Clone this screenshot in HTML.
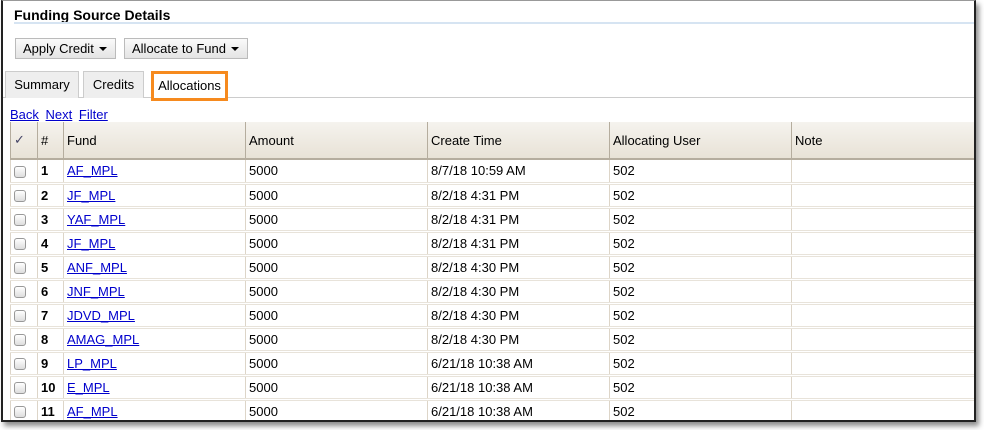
<!DOCTYPE html>
<html><head><style>
*{box-sizing:border-box;margin:0;padding:0}
body{width:984px;height:430px;background:#fff;font-family:"Liberation Sans",Arial,sans-serif;font-size:13px;color:#000;position:relative;overflow:hidden}
.frame{position:absolute;left:1px;top:0;width:975px;height:422px;border:2px solid #222;border-top:1px solid #999;box-shadow:3px 4px 5px rgba(0,0,0,.45);background:#fff;overflow:hidden}
.a{position:absolute}
.title{left:11px;top:6px;font-weight:bold;font-size:14px}
.uline{left:11px;top:21px;width:970px;height:2px;background:#d6e4f2}
.btn{top:37px;height:21px;border:1px solid #bbb;background:linear-gradient(#fafafa,#e4e4e4);line-height:19px;padding-left:7px;font-size:13px}
.btn:after{content:"";position:absolute;right:8px;top:8px;border-left:4px solid transparent;border-right:4px solid transparent;border-top:4px solid #000}
.tab{top:70px;height:27px;border:1px solid #ccc;border-bottom:none;background:#eee;line-height:26px;text-align:center}
.tabline{left:0;top:96px;width:980px;height:1px;background:#ccc}
.links{left:7px;top:106px}
.links span{color:#00c;text-decoration:underline;margin-right:3px}
table{position:absolute;left:7px;top:121px;border-collapse:collapse;width:970px}
th{height:37px;background:linear-gradient(#f5f3ee,#e8e2d6);border-left:1px solid #b5ad9e;border-bottom:2px solid #b5ad9e;text-align:left;font-weight:normal;padding-left:3px}
td{height:24px;border-left:1px solid #ddd5c8;border-bottom:3px double #e8e3da;padding-left:3px}
td.n{font-weight:bold}
td a{color:#00c;text-decoration:underline}
.cb{display:inline-block;width:12px;height:12px;border:1px solid #999;border-radius:3px;background:linear-gradient(#fff,#ddd);vertical-align:middle}
</style></head><body>
<div class="frame">
<div class="a title">Funding Source Details</div>
<div class="a uline"></div>
<div class="a btn" style="left:12px;width:101px">Apply Credit</div>
<div class="a btn" style="left:121px;width:124px">Allocate to Fund</div>
<div class="a tabline"></div>
<div class="a tab" style="left:2px;width:74px">Summary</div>
<div class="a tab" style="left:80px;width:61px">Credits</div>
<div class="a tab" style="left:148px;width:77px;background:#fff;border:3px solid #f68a1e;height:30px;line-height:24px">Allocations</div>
<div class="a links"><span>Back</span> <span>Next</span> <span>Filter</span></div>
<table>
<tr><th style="width:27px;color:#446">&#10003;</th><th style="width:26px">#</th><th style="width:182px">Fund</th><th style="width:182px">Amount</th><th style="width:182px">Create Time</th><th style="width:182px">Allocating User</th><th>Note</th></tr>
<tr><td><span class="cb"></span></td><td class="n">1</td><td><a>AF_MPL</a></td><td>5000</td><td>8/7/18 10:59 AM</td><td>502</td><td></td></tr>
<tr><td><span class="cb"></span></td><td class="n">2</td><td><a>JF_MPL</a></td><td>5000</td><td>8/2/18 4:31 PM</td><td>502</td><td></td></tr>
<tr><td><span class="cb"></span></td><td class="n">3</td><td><a>YAF_MPL</a></td><td>5000</td><td>8/2/18 4:31 PM</td><td>502</td><td></td></tr>
<tr><td><span class="cb"></span></td><td class="n">4</td><td><a>JF_MPL</a></td><td>5000</td><td>8/2/18 4:31 PM</td><td>502</td><td></td></tr>
<tr><td><span class="cb"></span></td><td class="n">5</td><td><a>ANF_MPL</a></td><td>5000</td><td>8/2/18 4:30 PM</td><td>502</td><td></td></tr>
<tr><td><span class="cb"></span></td><td class="n">6</td><td><a>JNF_MPL</a></td><td>5000</td><td>8/2/18 4:30 PM</td><td>502</td><td></td></tr>
<tr><td><span class="cb"></span></td><td class="n">7</td><td><a>JDVD_MPL</a></td><td>5000</td><td>8/2/18 4:30 PM</td><td>502</td><td></td></tr>
<tr><td><span class="cb"></span></td><td class="n">8</td><td><a>AMAG_MPL</a></td><td>5000</td><td>8/2/18 4:30 PM</td><td>502</td><td></td></tr>
<tr><td><span class="cb"></span></td><td class="n">9</td><td><a>LP_MPL</a></td><td>5000</td><td>6/21/18 10:38 AM</td><td>502</td><td></td></tr>
<tr><td><span class="cb"></span></td><td class="n">10</td><td><a>E_MPL</a></td><td>5000</td><td>6/21/18 10:38 AM</td><td>502</td><td></td></tr>
<tr><td><span class="cb"></span></td><td class="n">11</td><td><a>AF_MPL</a></td><td>5000</td><td>6/21/18 10:38 AM</td><td>502</td><td></td></tr>
</table>
</div>
</body></html>
